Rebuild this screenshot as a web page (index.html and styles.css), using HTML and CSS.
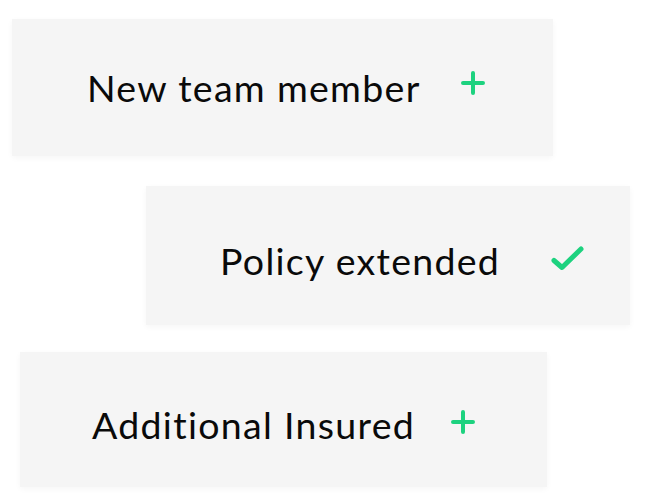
FILE: index.html
```html
<!DOCTYPE html>
<html lang="en">
<head>
<meta charset="utf-8">
<title>Notifications</title>
<link rel="stylesheet" href="styles.css">
</head>
<body>
<div class="stack">
  <div class="card card-1">
    <span class="label">New team member</span>
    <svg class="icon plus" viewBox="0 0 24 24" aria-hidden="true"><path d="M12 2v20M2 12h20"/></svg>
  </div>
  <div class="card card-2">
    <span class="label">Policy extended</span>
    <svg class="icon check" viewBox="0 0 33 25" aria-hidden="true"><path d="M3 14.5 11 21.5 30 3"/></svg>
  </div>
  <div class="card card-3">
    <span class="label">Additional Insured</span>
    <svg class="icon plus" viewBox="0 0 24 24" aria-hidden="true"><path d="M12 2v20M2 12h20"/></svg>
  </div>
</div>
</body>
</html>
```
FILE: styles.css
```css
html, body {
  margin: 0;
  padding: 0;
  background: #ffffff;
}
body {
  width: 653px;
  height: 501px;
  overflow: hidden;
  font-family: Lato, "Noto Sans", sans-serif;
}
.stack {
  display: flex;
  flex-direction: column;
  align-items: flex-start;
  padding-top: 19px;
}
.card {
  display: flex;
  align-items: center;
  box-sizing: border-box;
  background: #f5f5f5;
  box-shadow: 0 2px 6px rgba(0, 0, 0, 0.04);
}
.card-1 {
  margin-left: 12px;
  width: 541px;
  height: 137px;
  padding-left: 75px;
}
.card-2 {
  margin-top: 30px;
  margin-left: 146px;
  width: 484px;
  height: 139px;
  padding-left: 74px;
  padding-top: 10px;
}
.card-3 {
  margin-top: 27px;
  margin-left: 20px;
  width: 527px;
  height: 135px;
  padding-left: 72px;
  padding-top: 10px;
}
.label {
  font-size: 37.5px;
  letter-spacing: 1.3px;
  font-variant-ligatures: none;
  font-feature-settings: "liga" 0;
  color: #0a0a0a;
  line-height: 1;
  white-space: nowrap;
}
.icon {
  fill: none;
  stroke: #1dd27f;
  stroke-linecap: round;
  stroke-linejoin: round;
}
.plus {
  width: 24px;
  height: 24px;
  stroke-width: 4;
  margin-left: 40px;
  margin-top: -10px;
}
.card-3 .plus {
  margin-top: -6px;
  margin-left: 36px;
}
.check {
  width: 33px;
  height: 25px;
  stroke-width: 5;
  margin-left: 51px;
  margin-top: -4px;
}
```
